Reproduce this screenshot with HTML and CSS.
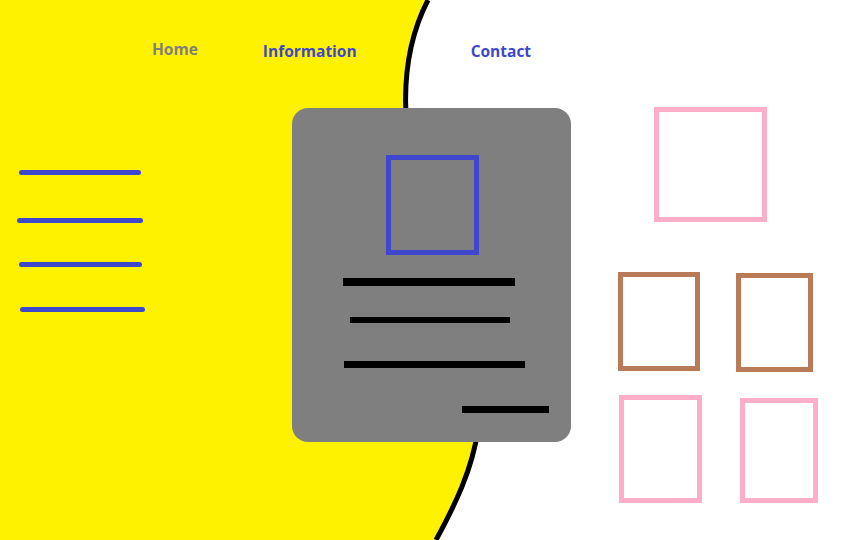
FILE: index.html
```html
<!DOCTYPE html>
<html lang="en">
<head>
    <meta charset="UTF-8">
    <meta name="viewport" content="width=device-width, initial-scale=1.0">
    <title>Document</title>
    <link rel="stylesheet" href="styles.css">
</head>
<body>
    <div class="page">
        <!-- yellow backdrop with the black curve -->
        <svg class="backdrop" width="864" height="540" viewBox="0 0 864 540">
            <path d="M428,0 C402,50 401,110 413,170 C432,260 490,360 478,430 C472,470 455,505 436,540 L0,540 L0,0 Z" fill="#fff200"/>
            <path d="M428,0 C402,50 401,110 413,170 C432,260 490,360 478,430 C472,470 455,505 436,540" fill="none" stroke="#000" stroke-width="5"/>
        </svg>

        <header class="nav">
            <a class="nav-link home">Home</a>
            <a class="nav-link info">Information</a>
            <a class="nav-link contact">Contact</a>
        </header>

        <main class="content">
            <div class="sidebar">
                <span class="bar bar-1"></span>
                <span class="bar bar-2"></span>
                <span class="bar bar-3"></span>
                <span class="bar bar-4"></span>
            </div>

            <div class="card">
                <div class="photo"></div>
                <span class="text-line line-1"></span>
                <span class="text-line line-2"></span>
                <span class="text-line line-3"></span>
                <span class="text-line line-4"></span>
            </div>

            <div class="gallery">
                <div class="frame pink big"></div>
                <div class="row row-1">
                    <div class="frame brown b1"></div>
                    <div class="frame brown b2"></div>
                </div>
                <div class="row row-2">
                    <div class="frame pink p1"></div>
                    <div class="frame pink p2"></div>
                </div>
            </div>
        </main>
    </div>
</body>
</html>
```

FILE: styles.css
```css
body, html {
    margin: 0;
    background: #fff;
}
.page {
    position: relative;
    width: 864px;
    height: 540px;
    overflow: hidden;
    font-family: "Open Sans", "Liberation Sans", sans-serif;
}
.backdrop {
    position: absolute;
    top: 0;
    left: 0;
    z-index: 0;
}
.nav, .content {
    position: relative;
    z-index: 1;
}

/* nav */
.nav {
    display: flex;
    align-items: flex-start;
    height: 107px;
    box-sizing: border-box;
    padding: 40px 0 0 152px;
}
.nav-link {
    font-size: 15.5px;
    font-weight: 700;
    line-height: 22px;
    color: #3f48cc;
}
.home {
    color: #7f7f7f;
    margin-top: -2px;
}
.info {
    margin-left: 65px;
}
.contact {
    margin-left: 114px;
}

/* main */
.content {
    display: flex;
    align-items: flex-start;
}
.sidebar {
    width: 292px;
    display: flex;
    flex-direction: column;
    padding-top: 63px;
}
.bar {
    display: block;
    height: 5px;
    border-radius: 3px;
    background: #3f48cc;
}
.bar-1 { margin-left: 19px; width: 122px; }
.bar-2 { margin-left: 17px; width: 126px; margin-top: 43px; }
.bar-3 { margin-left: 19px; width: 123px; margin-top: 39px; }
.bar-4 { margin-left: 20px; width: 125px; margin-top: 40px; }

.card {
    width: 279px;
    height: 334px;
    margin-top: 1px;
    border-radius: 16px;
    background: #7f7f7f;
    display: flex;
    flex-direction: column;
    align-items: flex-start;
}
.photo {
    width: 93px;
    height: 100px;
    box-sizing: border-box;
    border: 5px solid #3f48cc;
    margin: 47px 0 0 94px;
}
.text-line {
    display: block;
    background: #000;
}
.line-1 { margin: 23px 0 0 51px; width: 172px; height: 8px; }
.line-2 { margin: 31px 0 0 58px; width: 160px; height: 6px; }
.line-3 { margin: 38px 0 0 52px; width: 181px; height: 7px; }
.line-4 { margin: 38px 0 0 170px; width: 87px; height: 7px; }

/* right column */
.gallery {
    margin-left: 47px;
    display: flex;
    flex-direction: column;
    align-items: flex-start;
}
.row {
    display: flex;
    align-items: flex-start;
}
.frame {
    box-sizing: border-box;
    border: 5px solid;
}
.pink { border-color: #ffaec9; }
.brown { border-color: #b97a57; }

.big { width: 113px; height: 115px; margin-left: 36px; }
.row-1 { margin-top: 50px; }
.b1 { width: 82px; height: 99px; }
.b2 { width: 77px; height: 99px; margin: 1px 0 0 36px; }
.row-2 { margin-top: 23px; }
.p1 { width: 83px; height: 108px; margin-left: 1px; }
.p2 { width: 78px; height: 105px; margin: 3px 0 0 38px; }
```
